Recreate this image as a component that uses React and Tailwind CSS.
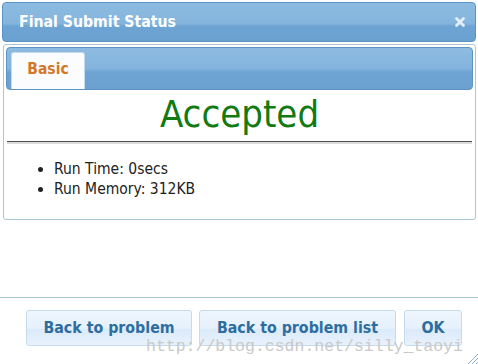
const font = {
  fontFamily: '"DejaVu Sans Condensed", "DejaVu Sans", Verdana, sans-serif',
  fontStretch: "condensed",
};

const Button = ({ children, className = "" }) => (
  <button
    className={`h-9 rounded-[3px] border border-[#c5dbec] bg-[linear-gradient(#eef6fe_0%,#e6f1fc_50%,#dbeafa_55%,#e8f2fc_100%)] px-4 text-[15.8px] font-bold text-[#2e6e9e] ${className}`}
  >
    {children}
  </button>
);

export default function App() {
  return (
    <div
      className="relative h-[364px] w-[478px] overflow-hidden bg-white"
      style={font}
    >
      {/* title bar */}
      <div className="mx-[2px] mt-[2px] flex h-[40px] items-center justify-between rounded-[4px] border border-[#5d93c4] bg-[linear-gradient(#8dbbe1_0%,#84b4dd_55%,#6ea4d3_60%,#6aa1d1_100%)] pl-[16px] pr-[9px]">
        <span className="text-[15.7px] font-bold text-white">
          Final Submit Status
        </span>
        <svg width="12" height="12" viewBox="0 0 12 12">
          <path
            d="M2.5 2.5 L9.5 9.5 M9.5 2.5 L2.5 9.5"
            stroke="#e4eef8"
            strokeWidth="2.8"
            strokeLinecap="round"
          />
        </svg>
      </div>

      {/* content panel */}
      <div className="ml-[3px] mr-[2px] mt-[2px] h-[176px] rounded-[3px] border border-[#aac7da] p-[2px]">
        <div className="flex h-[43px] items-end rounded-[4px] border border-[#5d93c4] bg-[linear-gradient(#8dbbe1_0%,#84b4dd_50%,#6ea4d3_58%,#6aa1d1_100%)] pl-[4px]">
          <div className="flex h-[37px] w-[74px] items-center justify-center rounded-t-[3px] border-x border-t border-[#c5dbec] bg-[#fbfcfd] pb-[2px] text-[15.5px] font-bold text-[#d2782b]">
            Basic
          </div>
        </div>
        <div className="text-center text-[38px] leading-[48px] text-[#117a11]">
          Accepted
        </div>
        <div className="mx-[1px] mt-[3px] h-[3px] border-t border-[#4d4d4d] bg-[#dcdcdc]" />
        <ul className="mt-[15px] list-disc pl-[48px] text-[15.5px] leading-[20px] text-[#222]">
          <li>Run Time: 0secs</li>
          <li>Run Memory: 312KB</li>
        </ul>
      </div>

      {/* footer */}
      <div className="mt-[77px] h-[68px] border-t border-[#a9c6d8]">
        <div className="flex gap-[7px] pl-[26px] pt-[12px]">
          <Button className="w-[166px]">Back to problem</Button>
          <Button className="w-[197px]">Back to problem list</Button>
          <Button className="ml-[1px] w-[58px] px-0">OK</Button>
        </div>
      </div>

      {/* watermark */}
      <div
        className="absolute left-[146px] top-[335px] text-[16.5px] text-[#c9c9c9]"
        style={{ fontFamily: '"Liberation Mono", "Courier New", monospace' }}
      >
        http://blog.csdn.net/silly_taoyi
      </div>

      {/* resize handle */}
      <svg
        className="absolute bottom-0 right-0"
        width="12"
        height="12"
        viewBox="0 0 12 12"
      >
        <path d="M12 2 L2 12 M12 6 L6 12 M12 10 L10 12" stroke="#8fb3cf" strokeWidth="1" />
      </svg>
    </div>
  );
}
